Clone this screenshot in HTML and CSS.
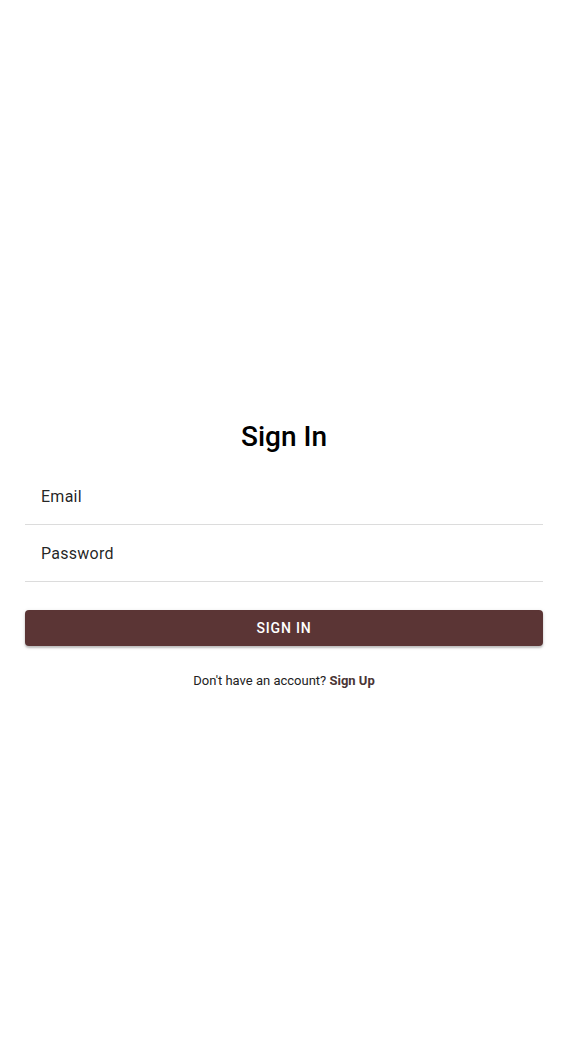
FILE: index.html
```html
<!DOCTYPE html>
<html>
<head>
<meta charset="utf-8">
<link rel="stylesheet" href="styles.css">
</head>
<body>
<main class="page">
  <form class="signin">
    <h1 class="title">Sign In</h1>
    <div class="field"><span class="field-label">Email</span></div>
    <div class="field"><span class="field-label">Password</span></div>
    <button type="button" class="btn">SIGN IN</button>
    <p class="alt">Don't have an account? <a class="alt-link">Sign Up</a></p>
  </form>
</main>
</body>
</html>
```
FILE: styles.css
```css
html, body {
  margin: 0;
  padding: 0;
  background: #fff;
}
body {
  font-family: Roboto, "Noto Sans", Arial, sans-serif;
  color: #000;
}
.page {
  height: 1062px;
  display: flex;
  flex-direction: column;
  padding: 0 24px 0 25px;
  box-sizing: border-box;
}
.signin {
  margin-top: 418px;
  display: flex;
  flex-direction: column;
}
.title {
  margin: 0;
  text-align: center;
  font-size: 28px;
  font-weight: 500;
  line-height: 38px;
  height: 50px;
}
.field {
  border-bottom: 1px solid #dcdcdc;
  display: flex;
  align-items: center;
  padding: 0 16px;
  box-sizing: border-box;
  height: 57px;
}
.field-label {
  font-size: 16px;
  letter-spacing: 0.25px;
  color: rgba(0,0,0,0.87);
}
.btn {
  margin-top: 28px;
  height: 36px;
  border: none;
  border-radius: 4px;
  background: #5b3535;
  color: #fff;
  font-family: inherit;
  font-size: 14px;
  font-weight: 500;
  letter-spacing: 0.85px;
  box-shadow: 0 2px 2px rgba(0,0,0,0.2), 0 1px 4px rgba(0,0,0,0.12);
}
.alt {
  margin: 27px 0 0;
  text-align: center;
  font-size: 13px;
  color: #222;
}
.alt-link {
  font-weight: 700;
  color: #4a3535;
}
```
